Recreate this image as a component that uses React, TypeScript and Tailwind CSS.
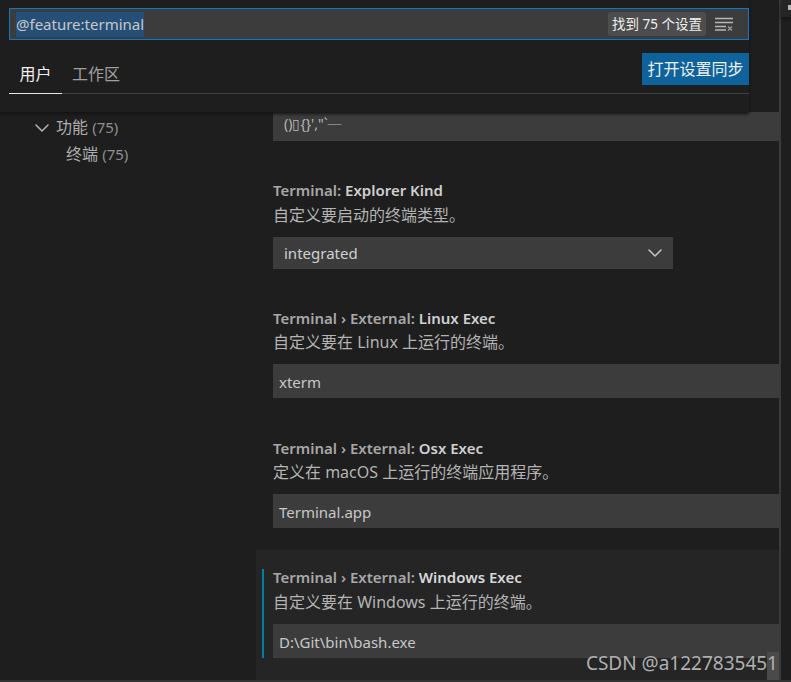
import { ChevronDown } from 'lucide-react'

const FONT = "font-['Noto_Sans','Noto_Sans_CJK_SC',sans-serif]"

function ClearIcon() {
  return (
    <svg width="18" height="14" viewBox="0 0 18 14" fill="none" stroke="#b8b8b8" strokeWidth="1.4">
      <path d="M0 1.5h18M0 5.5h18M0 9.5h11M0 13h11" />
      <path d="M13 9.5l4 4M17 9.5l-4 4" stroke="#9a9a9a" />
    </svg>
  )
}

function Setting({
  prefix,
  name,
  desc,
  value,
  className,
}: {
  prefix: string
  name: string
  desc: string
  value: string
  className: string
}) {
  return (
    <div className={`pl-[17px] pt-[9px] ${className}`}>
      <div className="text-[15px] leading-[20px] font-semibold text-[#a8a8a8]">
        {prefix} <span className="text-[#d0d0d0]">{name}</span>
      </div>
      <div className="mt-1 text-[16px] leading-[20px] text-[#b4b4b4]">{desc}</div>
      <div className="mt-[12px] h-[34px] bg-[#3c3c3c] pl-[6px] text-[15px] leading-[36px] text-[#c8c8c8]">
        {value}
      </div>
    </div>
  )
}

export default function App() {
  return (
    <div className={`${FONT} relative flex h-[682px] w-[791px] overflow-hidden bg-[#1e1e1e]`}>
      <div className="flex w-[779px] flex-col">
        <header className="relative z-10 h-[112px] w-[749px] shrink-0 bg-[#1e1e1e] pl-[9px] pt-2 shadow-[0_2px_3px_#141414]">
          <div className="flex h-[32px] w-[740px] items-center border border-[#0e78c8] bg-[#3c3c3c] pl-[6px] pr-[15px]">
            <span className="bg-[#264f78] text-[15px] leading-[25px] text-[#c8c8c8]">@feature:terminal</span>
            <span className="ml-auto rounded-[3px] bg-[#4d4d4d] px-1 text-[13.5px] leading-[24px] text-[#f0f0f0]">
              找到 75 个设置
            </span>
            <span className="ml-[9px] flex">
              <ClearIcon />
            </span>
          </div>
          <div className="relative mt-[13px] flex h-[41px] w-[740px] border-b border-[#3f3f3f]">
            <span className="w-[53px] border-b border-[#e8e8e8] -mb-px text-center text-[16px] leading-[42px] text-[#f0f0f0]">
              用户
            </span>
            <span className="ml-[10px] text-[16px] leading-[42px] text-[#a0a0a0]">工作区</span>
            <button className="ml-auto h-[32px] w-[107px] bg-[#0e639c] text-center text-[16px] leading-[32px] text-[#f0f0f0]">
              打开设置同步
            </button>
          </div>
        </header>

        <div className="flex min-h-0 flex-1">
          <aside className="w-[256px] shrink-0 pl-[30px] pt-[2px] text-[16px] leading-[27px] text-[#aeaeae]">
            <div className="flex items-center">
              <ChevronDown size={24} strokeWidth={1.5} className="mr-[2px] text-[#b4b4b4]" />
              <span>
                功能 <span className="text-[15px] text-[#8f8f8f]">(75)</span>
              </span>
            </div>
            <div className="pl-[36px]">
              终端 <span className="text-[15px] text-[#8f8f8f]">(75)</span>
            </div>
          </aside>

          <main className="min-w-0 flex-1">
            <div className="ml-[17px] h-[29px] bg-[#3c3c3c] pl-[11px] text-[14px] leading-[23px] text-[#b8b8b8]">
              ()▯{'{}'}',"`─
            </div>
            <div className="pl-[17px] pt-[38px]">
              <div className="text-[15px] leading-[22px] font-semibold text-[#a8a8a8]">
                Terminal: <span className="text-[#d0d0d0]">Explorer Kind</span>
              </div>
              <div className="mt-[4px] text-[16px] leading-[20px] text-[#b4b4b4]">自定义要启动的终端类型。</div>
              <div className="mt-[12px] flex h-[32px] w-[400px] items-center justify-between bg-[#3c3c3c] pl-[11px] pr-[6px] text-[15px] text-[#d0d0d0]">
                integrated
                <ChevronDown size={24} strokeWidth={1.5} className="text-[#c4c4c4]" />
              </div>
            </div>
            <div className="h-[30px]" />
            <Setting
              className="mb-[31px]"
              prefix="Terminal › External:"
              name="Linux Exec"
              desc="自定义要在 Linux 上运行的终端。"
              value="xterm"
            />
            <Setting
              className="mb-[22px]"
              prefix="Terminal › External:"
              name="Osx Exec"
              desc="定义在 macOS 上运行的终端应用程序。"
              value="Terminal.app"
            />
            <div className="h-[130px] bg-[#252526] pt-[19px]">
              <div className="ml-[6px] border-l-2 border-[#007fa8] pl-[9px]">
                <div className="text-[15px] leading-[16px] font-semibold text-[#a8a8a8]">
                  Terminal › External: <span className="text-[#d8d8d8]">Windows Exec</span>
                </div>
                <div className="mt-[7px] text-[16px] leading-[20px] text-[#b4b4b4]">
                  自定义要在 Windows 上运行的终端。
                </div>
                <div className="mt-[12px] h-[34px] bg-[#3c3c3c] pl-[6px] text-[15px] leading-[36px] text-[#c8c8c8]">
                  D:\Git\bin\bash.exe
                </div>
              </div>
            </div>
          </main>
        </div>
      </div>
      <div className="w-[2px] bg-[#3a3a3a]" />
      <div className="relative flex-1 bg-[#1e1e1e]">
        <div className="h-[17px] bg-[#252526] shadow-[0_2px_3px_#141414]" />
        <div className="absolute right-0 top-[5px] h-[5px] w-[3px] bg-[#b4b4b4]" />
      </div>
      {/* scrollbar slider under the watermark and the line at the window's bottom */}
      <div className="absolute left-[767px] top-[652px] h-[28px] w-[12px] bg-[#4a4a4a]" />
      <div className="absolute bottom-0 left-0 h-[2px] w-full bg-[#333333]" />
      <span className="absolute bottom-[7px] right-[13px] text-[19px] leading-[24px] text-[#b0b0b0]">
        CSDN @a1227835451
      </span>
    </div>
  )
}
